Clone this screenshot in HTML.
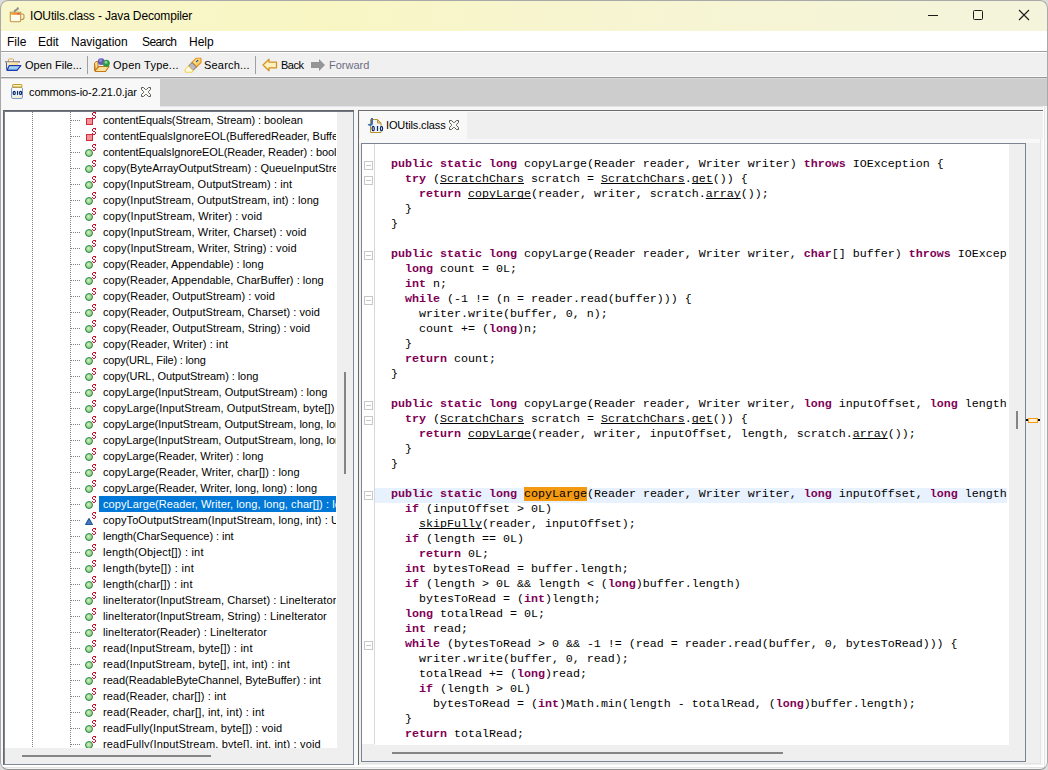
<!DOCTYPE html>
<html><head><meta charset="utf-8"><style>
html,body{margin:0;padding:0;width:1048px;height:770px;overflow:hidden;background:#dcdcdc}
div{position:absolute;box-sizing:content-box}
.t{font-family:"Liberation Sans",sans-serif;white-space:pre}
.c{position:absolute;left:16px;height:15px;font-family:"Liberation Mono",monospace;font-size:11.67px;line-height:13px;white-space:pre;color:#000}
.c b{color:#7f0055;font-weight:bold}
.c u{text-decoration:underline;text-underline-offset:1px;text-decoration-skip-ink:none}
.hl{background:#f39a12}
</style></head><body>
<div style="left:0;top:0;width:1048px;height:770px;border-radius:8px;overflow:hidden">
<div style="left:0px;top:0px;width:1048px;height:770px;background:#f7f7f7;"></div>
<div style="left:0;top:0;width:1048px;height:31px;background:linear-gradient(90deg,#f8f6cc 0%,#f9f6c4 30%,#f7f5d0 55%,#f4f4dc 100%)"></div>
<div style="left:0px;top:31px;width:1048px;height:20px;background:#ffffff;"></div>
<div style="left:0px;top:51px;width:1048px;height:1px;background:#a0a0a0;"></div>
<div style="left:0px;top:52px;width:1048px;height:1px;background:#ffffff;"></div>
<div style="left:0px;top:53px;width:1048px;height:23px;background:#f0f0f0;"></div>
<div style="left:0px;top:76px;width:1048px;height:1px;background:#fafafa;"></div>
<div style="left:0px;top:77px;width:1048px;height:1px;background:#989898;"></div>
<div style="left:0px;top:78px;width:1048px;height:1px;background:#d8d8d8;"></div>
<div style="left:160px;top:79px;width:888px;height:27px;background:#cdcdcd;"></div>
<div style="left:160px;top:106px;width:888px;height:1px;background:#e4e4e4;"></div>
<div style="left:2px;top:79px;width:158px;height:31px;background:#f8f8f8;"></div>
<div class="t" style="left:30px;top:9px;font-size:12px;line-height:14px;color:#000;letter-spacing:-0.15px">IOUtils.class - Java Decompiler</div>
<div class="t" style="left:7px;top:35px;font-size:12px;line-height:14px;color:#000;letter-spacing:0px">File</div>
<div class="t" style="left:38px;top:35px;font-size:12px;line-height:14px;color:#000;letter-spacing:0px">Edit</div>
<div class="t" style="left:71px;top:35px;font-size:12px;line-height:14px;color:#000;letter-spacing:0px">Navigation</div>
<div class="t" style="left:142px;top:35px;font-size:12px;line-height:14px;color:#000;letter-spacing:-0.6px">Search</div>
<div class="t" style="left:189px;top:35px;font-size:12px;line-height:14px;color:#000;letter-spacing:0px">Help</div>
<div class="t" style="left:25px;top:58px;font-size:11px;line-height:14px;color:#000;letter-spacing:0px">Open File...</div>
<div class="t" style="left:113px;top:58px;font-size:11px;line-height:14px;color:#000;letter-spacing:0.25px">Open Type...</div>
<div class="t" style="left:204px;top:58px;font-size:11px;line-height:14px;color:#000;letter-spacing:0.2px">Search...</div>
<div class="t" style="left:281px;top:58px;font-size:11px;line-height:14px;color:#000;letter-spacing:-0.5px">Back</div>
<div class="t" style="left:329px;top:58px;font-size:11px;line-height:14px;color:#6d6d80;letter-spacing:0px">Forward</div>
<div style="left:87px;top:56px;width:1px;height:18px;background:#a0a0a0;"></div>
<div style="left:255px;top:56px;width:1px;height:18px;background:#a0a0a0;"></div>
<div class="t" style="left:29px;top:85px;font-size:11px;line-height:14px;color:#000;letter-spacing:-0.08px">commons-io-2.21.0.jar</div>
<div style="left:3px;top:110px;width:351px;height:655px;background:#80889a;"></div>
<div style="left:3px;top:110px;width:351px;height:1px;background:#646464;"></div>
<div style="left:3px;top:111px;width:351px;height:1px;background:#707888;"></div>
<div style="left:3px;top:110px;width:1px;height:655px;background:#686868;"></div>
<div style="left:4px;top:111px;width:1px;height:653px;background:#7c8491;"></div>
<div style="left:5px;top:112px;width:348px;height:652px;background:#efefef;"></div>
<div style="left:5px;top:112px;width:332px;height:636px;background:#ffffff;"></div>
<div style="left:344px;top:372px;width:2px;height:102px;background:#858585;"></div>
<div style="left:22px;top:755px;width:189px;height:2px;background:#858585;"></div>
<div style="left:5px;top:112px;width:331px;height:636px;overflow:hidden;background:#fff">
<div style="left:27px;top:0;width:1px;height:636px;background:repeating-linear-gradient(180deg,#808080 0 1px,transparent 1px 2px)"></div>
<div style="left:65px;top:0;width:1px;height:636px;background:repeating-linear-gradient(180deg,#808080 0 1px,transparent 1px 2px)"></div>
<div style="left:66px;top:8px;width:9px;height:1px;background:repeating-linear-gradient(90deg,#808080 0 1px,transparent 1px 2px)"></div>
<div style="left:81px;top:6px;width:5px;height:5px;border:1px solid #d42a3a;background:#f49098"></div>
<svg style="position:absolute;left:87px;top:0px" width="5" height="7" shape-rendering="crispEdges"><path d="M1 0h3v1h-3zM0 1h1v2h-1zM3 1h1v1h-1zM1 3h2v1h-2zM3 4h1v2h-1zM0 5h1v1h-1zM1 6h2v1h-2z" fill="#d0102a"/><path d="M2 3h1v1h-1z M0 2.5h0" fill="#d0102a" opacity="0.5"/></svg>
<div class="t" style="left:98px;top:1px;font-size:11px;line-height:14px;color:#000;letter-spacing:-0.068px">contentEquals(Stream, Stream) : boolean</div>
<div style="left:66px;top:24px;width:9px;height:1px;background:repeating-linear-gradient(90deg,#808080 0 1px,transparent 1px 2px)"></div>
<div style="left:81px;top:22px;width:5px;height:5px;border:1px solid #d42a3a;background:#f49098"></div>
<svg style="position:absolute;left:87px;top:16px" width="5" height="7" shape-rendering="crispEdges"><path d="M1 0h3v1h-3zM0 1h1v2h-1zM3 1h1v1h-1zM1 3h2v1h-2zM3 4h1v2h-1zM0 5h1v1h-1zM1 6h2v1h-2z" fill="#d0102a"/><path d="M2 3h1v1h-1z M0 2.5h0" fill="#d0102a" opacity="0.5"/></svg>
<div class="t" style="left:98px;top:17px;font-size:11px;line-height:14px;color:#000;letter-spacing:0.000px">contentEqualsIgnoreEOL(BufferedReader, BufferedReader) : boolean</div>
<div style="left:66px;top:40px;width:9px;height:1px;background:repeating-linear-gradient(90deg,#808080 0 1px,transparent 1px 2px)"></div>
<div style="left:80px;top:37px;width:6px;height:6px;border-radius:50%;border:1px solid #1f8a3c;background:radial-gradient(circle at 45% 40%,#d4ecc8 0,#9ccf8c 60%,#5aaa60 100%)"></div>
<svg style="position:absolute;left:87px;top:32px" width="5" height="7" shape-rendering="crispEdges"><path d="M1 0h3v1h-3zM0 1h1v2h-1zM3 1h1v1h-1zM1 3h2v1h-2zM3 4h1v2h-1zM0 5h1v1h-1zM1 6h2v1h-2z" fill="#d0102a"/><path d="M2 3h1v1h-1z M0 2.5h0" fill="#d0102a" opacity="0.5"/></svg>
<div class="t" style="left:98px;top:33px;font-size:11px;line-height:14px;color:#000;letter-spacing:-0.100px">contentEqualsIgnoreEOL(Reader, Reader) : boolean</div>
<div style="left:66px;top:56px;width:9px;height:1px;background:repeating-linear-gradient(90deg,#808080 0 1px,transparent 1px 2px)"></div>
<div style="left:80px;top:53px;width:6px;height:6px;border-radius:50%;border:1px solid #1f8a3c;background:radial-gradient(circle at 45% 40%,#d4ecc8 0,#9ccf8c 60%,#5aaa60 100%)"></div>
<svg style="position:absolute;left:87px;top:48px" width="5" height="7" shape-rendering="crispEdges"><path d="M1 0h3v1h-3zM0 1h1v2h-1zM3 1h1v1h-1zM1 3h2v1h-2zM3 4h1v2h-1zM0 5h1v1h-1zM1 6h2v1h-2z" fill="#d0102a"/><path d="M2 3h1v1h-1z M0 2.5h0" fill="#d0102a" opacity="0.5"/></svg>
<div class="t" style="left:98px;top:49px;font-size:11px;line-height:14px;color:#000;letter-spacing:0.030px">copy(ByteArrayOutputStream) : QueueInputStream</div>
<div style="left:66px;top:72px;width:9px;height:1px;background:repeating-linear-gradient(90deg,#808080 0 1px,transparent 1px 2px)"></div>
<div style="left:80px;top:69px;width:6px;height:6px;border-radius:50%;border:1px solid #1f8a3c;background:radial-gradient(circle at 45% 40%,#d4ecc8 0,#9ccf8c 60%,#5aaa60 100%)"></div>
<svg style="position:absolute;left:87px;top:64px" width="5" height="7" shape-rendering="crispEdges"><path d="M1 0h3v1h-3zM0 1h1v2h-1zM3 1h1v1h-1zM1 3h2v1h-2zM3 4h1v2h-1zM0 5h1v1h-1zM1 6h2v1h-2z" fill="#d0102a"/><path d="M2 3h1v1h-1z M0 2.5h0" fill="#d0102a" opacity="0.5"/></svg>
<div class="t" style="left:98px;top:65px;font-size:11px;line-height:14px;color:#000;letter-spacing:0.089px">copy(InputStream, OutputStream) : int</div>
<div style="left:66px;top:88px;width:9px;height:1px;background:repeating-linear-gradient(90deg,#808080 0 1px,transparent 1px 2px)"></div>
<div style="left:80px;top:85px;width:6px;height:6px;border-radius:50%;border:1px solid #1f8a3c;background:radial-gradient(circle at 45% 40%,#d4ecc8 0,#9ccf8c 60%,#5aaa60 100%)"></div>
<svg style="position:absolute;left:87px;top:80px" width="5" height="7" shape-rendering="crispEdges"><path d="M1 0h3v1h-3zM0 1h1v2h-1zM3 1h1v1h-1zM1 3h2v1h-2zM3 4h1v2h-1zM0 5h1v1h-1zM1 6h2v1h-2z" fill="#d0102a"/><path d="M2 3h1v1h-1z M0 2.5h0" fill="#d0102a" opacity="0.5"/></svg>
<div class="t" style="left:98px;top:81px;font-size:11px;line-height:14px;color:#000;letter-spacing:0.076px">copy(InputStream, OutputStream, int) : long</div>
<div style="left:66px;top:104px;width:9px;height:1px;background:repeating-linear-gradient(90deg,#808080 0 1px,transparent 1px 2px)"></div>
<div style="left:80px;top:101px;width:6px;height:6px;border-radius:50%;border:1px solid #1f8a3c;background:radial-gradient(circle at 45% 40%,#d4ecc8 0,#9ccf8c 60%,#5aaa60 100%)"></div>
<svg style="position:absolute;left:87px;top:96px" width="5" height="7" shape-rendering="crispEdges"><path d="M1 0h3v1h-3zM0 1h1v2h-1zM3 1h1v1h-1zM1 3h2v1h-2zM3 4h1v2h-1zM0 5h1v1h-1zM1 6h2v1h-2z" fill="#d0102a"/><path d="M2 3h1v1h-1z M0 2.5h0" fill="#d0102a" opacity="0.5"/></svg>
<div class="t" style="left:98px;top:97px;font-size:11px;line-height:14px;color:#000;letter-spacing:0.132px">copy(InputStream, Writer) : void</div>
<div style="left:66px;top:120px;width:9px;height:1px;background:repeating-linear-gradient(90deg,#808080 0 1px,transparent 1px 2px)"></div>
<div style="left:80px;top:117px;width:6px;height:6px;border-radius:50%;border:1px solid #1f8a3c;background:radial-gradient(circle at 45% 40%,#d4ecc8 0,#9ccf8c 60%,#5aaa60 100%)"></div>
<svg style="position:absolute;left:87px;top:112px" width="5" height="7" shape-rendering="crispEdges"><path d="M1 0h3v1h-3zM0 1h1v2h-1zM3 1h1v1h-1zM1 3h2v1h-2zM3 4h1v2h-1zM0 5h1v1h-1zM1 6h2v1h-2z" fill="#d0102a"/><path d="M2 3h1v1h-1z M0 2.5h0" fill="#d0102a" opacity="0.5"/></svg>
<div class="t" style="left:98px;top:113px;font-size:11px;line-height:14px;color:#000;letter-spacing:0.108px">copy(InputStream, Writer, Charset) : void</div>
<div style="left:66px;top:136px;width:9px;height:1px;background:repeating-linear-gradient(90deg,#808080 0 1px,transparent 1px 2px)"></div>
<div style="left:80px;top:133px;width:6px;height:6px;border-radius:50%;border:1px solid #1f8a3c;background:radial-gradient(circle at 45% 40%,#d4ecc8 0,#9ccf8c 60%,#5aaa60 100%)"></div>
<svg style="position:absolute;left:87px;top:128px" width="5" height="7" shape-rendering="crispEdges"><path d="M1 0h3v1h-3zM0 1h1v2h-1zM3 1h1v1h-1zM1 3h2v1h-2zM3 4h1v2h-1zM0 5h1v1h-1zM1 6h2v1h-2z" fill="#d0102a"/><path d="M2 3h1v1h-1z M0 2.5h0" fill="#d0102a" opacity="0.5"/></svg>
<div class="t" style="left:98px;top:129px;font-size:11px;line-height:14px;color:#000;letter-spacing:0.108px">copy(InputStream, Writer, String) : void</div>
<div style="left:66px;top:152px;width:9px;height:1px;background:repeating-linear-gradient(90deg,#808080 0 1px,transparent 1px 2px)"></div>
<div style="left:80px;top:149px;width:6px;height:6px;border-radius:50%;border:1px solid #1f8a3c;background:radial-gradient(circle at 45% 40%,#d4ecc8 0,#9ccf8c 60%,#5aaa60 100%)"></div>
<svg style="position:absolute;left:87px;top:144px" width="5" height="7" shape-rendering="crispEdges"><path d="M1 0h3v1h-3zM0 1h1v2h-1zM3 1h1v1h-1zM1 3h2v1h-2zM3 4h1v2h-1zM0 5h1v1h-1zM1 6h2v1h-2z" fill="#d0102a"/><path d="M2 3h1v1h-1z M0 2.5h0" fill="#d0102a" opacity="0.5"/></svg>
<div class="t" style="left:98px;top:145px;font-size:11px;line-height:14px;color:#000;letter-spacing:0.010px">copy(Reader, Appendable) : long</div>
<div style="left:66px;top:168px;width:9px;height:1px;background:repeating-linear-gradient(90deg,#808080 0 1px,transparent 1px 2px)"></div>
<div style="left:80px;top:165px;width:6px;height:6px;border-radius:50%;border:1px solid #1f8a3c;background:radial-gradient(circle at 45% 40%,#d4ecc8 0,#9ccf8c 60%,#5aaa60 100%)"></div>
<svg style="position:absolute;left:87px;top:160px" width="5" height="7" shape-rendering="crispEdges"><path d="M1 0h3v1h-3zM0 1h1v2h-1zM3 1h1v1h-1zM1 3h2v1h-2zM3 4h1v2h-1zM0 5h1v1h-1zM1 6h2v1h-2z" fill="#d0102a"/><path d="M2 3h1v1h-1z M0 2.5h0" fill="#d0102a" opacity="0.5"/></svg>
<div class="t" style="left:98px;top:161px;font-size:11px;line-height:14px;color:#000;letter-spacing:0.033px">copy(Reader, Appendable, CharBuffer) : long</div>
<div style="left:66px;top:184px;width:9px;height:1px;background:repeating-linear-gradient(90deg,#808080 0 1px,transparent 1px 2px)"></div>
<div style="left:80px;top:181px;width:6px;height:6px;border-radius:50%;border:1px solid #1f8a3c;background:radial-gradient(circle at 45% 40%,#d4ecc8 0,#9ccf8c 60%,#5aaa60 100%)"></div>
<svg style="position:absolute;left:87px;top:176px" width="5" height="7" shape-rendering="crispEdges"><path d="M1 0h3v1h-3zM0 1h1v2h-1zM3 1h1v1h-1zM1 3h2v1h-2zM3 4h1v2h-1zM0 5h1v1h-1zM1 6h2v1h-2z" fill="#d0102a"/><path d="M2 3h1v1h-1z M0 2.5h0" fill="#d0102a" opacity="0.5"/></svg>
<div class="t" style="left:98px;top:177px;font-size:11px;line-height:14px;color:#000;letter-spacing:0.059px">copy(Reader, OutputStream) : void</div>
<div style="left:66px;top:200px;width:9px;height:1px;background:repeating-linear-gradient(90deg,#808080 0 1px,transparent 1px 2px)"></div>
<div style="left:80px;top:197px;width:6px;height:6px;border-radius:50%;border:1px solid #1f8a3c;background:radial-gradient(circle at 45% 40%,#d4ecc8 0,#9ccf8c 60%,#5aaa60 100%)"></div>
<svg style="position:absolute;left:87px;top:192px" width="5" height="7" shape-rendering="crispEdges"><path d="M1 0h3v1h-3zM0 1h1v2h-1zM3 1h1v1h-1zM1 3h2v1h-2zM3 4h1v2h-1zM0 5h1v1h-1zM1 6h2v1h-2z" fill="#d0102a"/><path d="M2 3h1v1h-1z M0 2.5h0" fill="#d0102a" opacity="0.5"/></svg>
<div class="t" style="left:98px;top:193px;font-size:11px;line-height:14px;color:#000;letter-spacing:0.056px">copy(Reader, OutputStream, Charset) : void</div>
<div style="left:66px;top:216px;width:9px;height:1px;background:repeating-linear-gradient(90deg,#808080 0 1px,transparent 1px 2px)"></div>
<div style="left:80px;top:213px;width:6px;height:6px;border-radius:50%;border:1px solid #1f8a3c;background:radial-gradient(circle at 45% 40%,#d4ecc8 0,#9ccf8c 60%,#5aaa60 100%)"></div>
<svg style="position:absolute;left:87px;top:208px" width="5" height="7" shape-rendering="crispEdges"><path d="M1 0h3v1h-3zM0 1h1v2h-1zM3 1h1v1h-1zM1 3h2v1h-2zM3 4h1v2h-1zM0 5h1v1h-1zM1 6h2v1h-2z" fill="#d0102a"/><path d="M2 3h1v1h-1z M0 2.5h0" fill="#d0102a" opacity="0.5"/></svg>
<div class="t" style="left:98px;top:209px;font-size:11px;line-height:14px;color:#000;letter-spacing:0.060px">copy(Reader, OutputStream, String) : void</div>
<div style="left:66px;top:232px;width:9px;height:1px;background:repeating-linear-gradient(90deg,#808080 0 1px,transparent 1px 2px)"></div>
<div style="left:80px;top:229px;width:6px;height:6px;border-radius:50%;border:1px solid #1f8a3c;background:radial-gradient(circle at 45% 40%,#d4ecc8 0,#9ccf8c 60%,#5aaa60 100%)"></div>
<svg style="position:absolute;left:87px;top:224px" width="5" height="7" shape-rendering="crispEdges"><path d="M1 0h3v1h-3zM0 1h1v2h-1zM3 1h1v1h-1zM1 3h2v1h-2zM3 4h1v2h-1zM0 5h1v1h-1zM1 6h2v1h-2z" fill="#d0102a"/><path d="M2 3h1v1h-1z M0 2.5h0" fill="#d0102a" opacity="0.5"/></svg>
<div class="t" style="left:98px;top:225px;font-size:11px;line-height:14px;color:#000;letter-spacing:0.116px">copy(Reader, Writer) : int</div>
<div style="left:66px;top:248px;width:9px;height:1px;background:repeating-linear-gradient(90deg,#808080 0 1px,transparent 1px 2px)"></div>
<div style="left:80px;top:245px;width:6px;height:6px;border-radius:50%;border:1px solid #1f8a3c;background:radial-gradient(circle at 45% 40%,#d4ecc8 0,#9ccf8c 60%,#5aaa60 100%)"></div>
<svg style="position:absolute;left:87px;top:240px" width="5" height="7" shape-rendering="crispEdges"><path d="M1 0h3v1h-3zM0 1h1v2h-1zM3 1h1v1h-1zM1 3h2v1h-2zM3 4h1v2h-1zM0 5h1v1h-1zM1 6h2v1h-2z" fill="#d0102a"/><path d="M2 3h1v1h-1z M0 2.5h0" fill="#d0102a" opacity="0.5"/></svg>
<div class="t" style="left:98px;top:241px;font-size:11px;line-height:14px;color:#000;letter-spacing:-0.167px">copy(URL, File) : long</div>
<div style="left:66px;top:264px;width:9px;height:1px;background:repeating-linear-gradient(90deg,#808080 0 1px,transparent 1px 2px)"></div>
<div style="left:80px;top:261px;width:6px;height:6px;border-radius:50%;border:1px solid #1f8a3c;background:radial-gradient(circle at 45% 40%,#d4ecc8 0,#9ccf8c 60%,#5aaa60 100%)"></div>
<svg style="position:absolute;left:87px;top:256px" width="5" height="7" shape-rendering="crispEdges"><path d="M1 0h3v1h-3zM0 1h1v2h-1zM3 1h1v1h-1zM1 3h2v1h-2zM3 4h1v2h-1zM0 5h1v1h-1zM1 6h2v1h-2z" fill="#d0102a"/><path d="M2 3h1v1h-1z M0 2.5h0" fill="#d0102a" opacity="0.5"/></svg>
<div class="t" style="left:98px;top:257px;font-size:11px;line-height:14px;color:#000;letter-spacing:-0.062px">copy(URL, OutputStream) : long</div>
<div style="left:66px;top:280px;width:9px;height:1px;background:repeating-linear-gradient(90deg,#808080 0 1px,transparent 1px 2px)"></div>
<div style="left:80px;top:277px;width:6px;height:6px;border-radius:50%;border:1px solid #1f8a3c;background:radial-gradient(circle at 45% 40%,#d4ecc8 0,#9ccf8c 60%,#5aaa60 100%)"></div>
<svg style="position:absolute;left:87px;top:272px" width="5" height="7" shape-rendering="crispEdges"><path d="M1 0h3v1h-3zM0 1h1v2h-1zM3 1h1v1h-1zM1 3h2v1h-2zM3 4h1v2h-1zM0 5h1v1h-1zM1 6h2v1h-2z" fill="#d0102a"/><path d="M2 3h1v1h-1z M0 2.5h0" fill="#d0102a" opacity="0.5"/></svg>
<div class="t" style="left:98px;top:273px;font-size:11px;line-height:14px;color:#000;letter-spacing:0.031px">copyLarge(InputStream, OutputStream) : long</div>
<div style="left:66px;top:296px;width:9px;height:1px;background:repeating-linear-gradient(90deg,#808080 0 1px,transparent 1px 2px)"></div>
<div style="left:80px;top:293px;width:6px;height:6px;border-radius:50%;border:1px solid #1f8a3c;background:radial-gradient(circle at 45% 40%,#d4ecc8 0,#9ccf8c 60%,#5aaa60 100%)"></div>
<svg style="position:absolute;left:87px;top:288px" width="5" height="7" shape-rendering="crispEdges"><path d="M1 0h3v1h-3zM0 1h1v2h-1zM3 1h1v1h-1zM1 3h2v1h-2zM3 4h1v2h-1zM0 5h1v1h-1zM1 6h2v1h-2z" fill="#d0102a"/><path d="M2 3h1v1h-1z M0 2.5h0" fill="#d0102a" opacity="0.5"/></svg>
<div class="t" style="left:98px;top:289px;font-size:11px;line-height:14px;color:#000;letter-spacing:0.120px">copyLarge(InputStream, OutputStream, byte[]) : long</div>
<div style="left:66px;top:312px;width:9px;height:1px;background:repeating-linear-gradient(90deg,#808080 0 1px,transparent 1px 2px)"></div>
<div style="left:80px;top:309px;width:6px;height:6px;border-radius:50%;border:1px solid #1f8a3c;background:radial-gradient(circle at 45% 40%,#d4ecc8 0,#9ccf8c 60%,#5aaa60 100%)"></div>
<svg style="position:absolute;left:87px;top:304px" width="5" height="7" shape-rendering="crispEdges"><path d="M1 0h3v1h-3zM0 1h1v2h-1zM3 1h1v1h-1zM1 3h2v1h-2zM3 4h1v2h-1zM0 5h1v1h-1zM1 6h2v1h-2z" fill="#d0102a"/><path d="M2 3h1v1h-1z M0 2.5h0" fill="#d0102a" opacity="0.5"/></svg>
<div class="t" style="left:98px;top:305px;font-size:11px;line-height:14px;color:#000;letter-spacing:0.020px">copyLarge(InputStream, OutputStream, long, long) : long</div>
<div style="left:66px;top:328px;width:9px;height:1px;background:repeating-linear-gradient(90deg,#808080 0 1px,transparent 1px 2px)"></div>
<div style="left:80px;top:325px;width:6px;height:6px;border-radius:50%;border:1px solid #1f8a3c;background:radial-gradient(circle at 45% 40%,#d4ecc8 0,#9ccf8c 60%,#5aaa60 100%)"></div>
<svg style="position:absolute;left:87px;top:320px" width="5" height="7" shape-rendering="crispEdges"><path d="M1 0h3v1h-3zM0 1h1v2h-1zM3 1h1v1h-1zM1 3h2v1h-2zM3 4h1v2h-1zM0 5h1v1h-1zM1 6h2v1h-2z" fill="#d0102a"/><path d="M2 3h1v1h-1z M0 2.5h0" fill="#d0102a" opacity="0.5"/></svg>
<div class="t" style="left:98px;top:321px;font-size:11px;line-height:14px;color:#000;letter-spacing:0.020px">copyLarge(InputStream, OutputStream, long, long, byte[]) : long</div>
<div style="left:66px;top:344px;width:9px;height:1px;background:repeating-linear-gradient(90deg,#808080 0 1px,transparent 1px 2px)"></div>
<div style="left:80px;top:341px;width:6px;height:6px;border-radius:50%;border:1px solid #1f8a3c;background:radial-gradient(circle at 45% 40%,#d4ecc8 0,#9ccf8c 60%,#5aaa60 100%)"></div>
<svg style="position:absolute;left:87px;top:336px" width="5" height="7" shape-rendering="crispEdges"><path d="M1 0h3v1h-3zM0 1h1v2h-1zM3 1h1v1h-1zM1 3h2v1h-2zM3 4h1v2h-1zM0 5h1v1h-1zM1 6h2v1h-2z" fill="#d0102a"/><path d="M2 3h1v1h-1z M0 2.5h0" fill="#d0102a" opacity="0.5"/></svg>
<div class="t" style="left:98px;top:337px;font-size:11px;line-height:14px;color:#000;letter-spacing:0.035px">copyLarge(Reader, Writer) : long</div>
<div style="left:66px;top:360px;width:9px;height:1px;background:repeating-linear-gradient(90deg,#808080 0 1px,transparent 1px 2px)"></div>
<div style="left:80px;top:357px;width:6px;height:6px;border-radius:50%;border:1px solid #1f8a3c;background:radial-gradient(circle at 45% 40%,#d4ecc8 0,#9ccf8c 60%,#5aaa60 100%)"></div>
<svg style="position:absolute;left:87px;top:352px" width="5" height="7" shape-rendering="crispEdges"><path d="M1 0h3v1h-3zM0 1h1v2h-1zM3 1h1v1h-1zM1 3h2v1h-2zM3 4h1v2h-1zM0 5h1v1h-1zM1 6h2v1h-2z" fill="#d0102a"/><path d="M2 3h1v1h-1z M0 2.5h0" fill="#d0102a" opacity="0.5"/></svg>
<div class="t" style="left:98px;top:353px;font-size:11px;line-height:14px;color:#000;letter-spacing:0.108px">copyLarge(Reader, Writer, char[]) : long</div>
<div style="left:66px;top:376px;width:9px;height:1px;background:repeating-linear-gradient(90deg,#808080 0 1px,transparent 1px 2px)"></div>
<div style="left:80px;top:373px;width:6px;height:6px;border-radius:50%;border:1px solid #1f8a3c;background:radial-gradient(circle at 45% 40%,#d4ecc8 0,#9ccf8c 60%,#5aaa60 100%)"></div>
<svg style="position:absolute;left:87px;top:368px" width="5" height="7" shape-rendering="crispEdges"><path d="M1 0h3v1h-3zM0 1h1v2h-1zM3 1h1v1h-1zM1 3h2v1h-2zM3 4h1v2h-1zM0 5h1v1h-1zM1 6h2v1h-2z" fill="#d0102a"/><path d="M2 3h1v1h-1z M0 2.5h0" fill="#d0102a" opacity="0.5"/></svg>
<div class="t" style="left:98px;top:369px;font-size:11px;line-height:14px;color:#000;letter-spacing:0.035px">copyLarge(Reader, Writer, long, long) : long</div>
<div style="left:66px;top:392px;width:9px;height:1px;background:repeating-linear-gradient(90deg,#808080 0 1px,transparent 1px 2px)"></div>
<div style="left:94px;top:384px;width:300px;height:16px;background:#0078d7;"></div>
<div style="left:80px;top:389px;width:6px;height:6px;border-radius:50%;border:1px solid #1f8a3c;background:radial-gradient(circle at 45% 40%,#d4ecc8 0,#9ccf8c 60%,#5aaa60 100%)"></div>
<svg style="position:absolute;left:87px;top:384px" width="5" height="7" shape-rendering="crispEdges"><path d="M1 0h3v1h-3zM0 1h1v2h-1zM3 1h1v1h-1zM1 3h2v1h-2zM3 4h1v2h-1zM0 5h1v1h-1zM1 6h2v1h-2z" fill="#d0102a"/><path d="M2 3h1v1h-1z M0 2.5h0" fill="#d0102a" opacity="0.5"/></svg>
<div class="t" style="left:98px;top:385px;font-size:11px;line-height:14px;color:#fff;letter-spacing:0.080px">copyLarge(Reader, Writer, long, long, char[]) : long</div>
<div style="left:66px;top:408px;width:9px;height:1px;background:repeating-linear-gradient(90deg,#808080 0 1px,transparent 1px 2px)"></div>
<svg style="position:absolute;left:80px;top:406px" width="8" height="7"><path d="M4 0.6 L7.4 6.5 L0.6 6.5 Z" fill="#4a78b8" stroke="#1c58a0" stroke-width="1.1" stroke-linejoin="round"/></svg>
<svg style="position:absolute;left:87px;top:400px" width="5" height="7" shape-rendering="crispEdges"><path d="M1 0h3v1h-3zM0 1h1v2h-1zM3 1h1v1h-1zM1 3h2v1h-2zM3 4h1v2h-1zM0 5h1v1h-1zM1 6h2v1h-2z" fill="#d0102a"/><path d="M2 3h1v1h-1z M0 2.5h0" fill="#d0102a" opacity="0.5"/></svg>
<div class="t" style="left:98px;top:401px;font-size:11px;line-height:14px;color:#000;letter-spacing:0.080px">copyToOutputStream(InputStream, long, int) : UnsynchronizedByteArrayInputStream</div>
<div style="left:66px;top:424px;width:9px;height:1px;background:repeating-linear-gradient(90deg,#808080 0 1px,transparent 1px 2px)"></div>
<div style="left:80px;top:421px;width:6px;height:6px;border-radius:50%;border:1px solid #1f8a3c;background:radial-gradient(circle at 45% 40%,#d4ecc8 0,#9ccf8c 60%,#5aaa60 100%)"></div>
<svg style="position:absolute;left:87px;top:416px" width="5" height="7" shape-rendering="crispEdges"><path d="M1 0h3v1h-3zM0 1h1v2h-1zM3 1h1v1h-1zM1 3h2v1h-2zM3 4h1v2h-1zM0 5h1v1h-1zM1 6h2v1h-2z" fill="#d0102a"/><path d="M2 3h1v1h-1z M0 2.5h0" fill="#d0102a" opacity="0.5"/></svg>
<div class="t" style="left:98px;top:417px;font-size:11px;line-height:14px;color:#000;letter-spacing:-0.032px">length(CharSequence) : int</div>
<div style="left:66px;top:440px;width:9px;height:1px;background:repeating-linear-gradient(90deg,#808080 0 1px,transparent 1px 2px)"></div>
<div style="left:80px;top:437px;width:6px;height:6px;border-radius:50%;border:1px solid #1f8a3c;background:radial-gradient(circle at 45% 40%,#d4ecc8 0,#9ccf8c 60%,#5aaa60 100%)"></div>
<svg style="position:absolute;left:87px;top:432px" width="5" height="7" shape-rendering="crispEdges"><path d="M1 0h3v1h-3zM0 1h1v2h-1zM3 1h1v1h-1zM1 3h2v1h-2zM3 4h1v2h-1zM0 5h1v1h-1zM1 6h2v1h-2z" fill="#d0102a"/><path d="M2 3h1v1h-1z M0 2.5h0" fill="#d0102a" opacity="0.5"/></svg>
<div class="t" style="left:98px;top:433px;font-size:11px;line-height:14px;color:#000;letter-spacing:0.214px">length(Object[]) : int</div>
<div style="left:66px;top:456px;width:9px;height:1px;background:repeating-linear-gradient(90deg,#808080 0 1px,transparent 1px 2px)"></div>
<div style="left:80px;top:453px;width:6px;height:6px;border-radius:50%;border:1px solid #1f8a3c;background:radial-gradient(circle at 45% 40%,#d4ecc8 0,#9ccf8c 60%,#5aaa60 100%)"></div>
<svg style="position:absolute;left:87px;top:448px" width="5" height="7" shape-rendering="crispEdges"><path d="M1 0h3v1h-3zM0 1h1v2h-1zM3 1h1v1h-1zM1 3h2v1h-2zM3 4h1v2h-1zM0 5h1v1h-1zM1 6h2v1h-2z" fill="#d0102a"/><path d="M2 3h1v1h-1z M0 2.5h0" fill="#d0102a" opacity="0.5"/></svg>
<div class="t" style="left:98px;top:449px;font-size:11px;line-height:14px;color:#000;letter-spacing:0.300px">length(byte[]) : int</div>
<div style="left:66px;top:472px;width:9px;height:1px;background:repeating-linear-gradient(90deg,#808080 0 1px,transparent 1px 2px)"></div>
<div style="left:80px;top:469px;width:6px;height:6px;border-radius:50%;border:1px solid #1f8a3c;background:radial-gradient(circle at 45% 40%,#d4ecc8 0,#9ccf8c 60%,#5aaa60 100%)"></div>
<svg style="position:absolute;left:87px;top:464px" width="5" height="7" shape-rendering="crispEdges"><path d="M1 0h3v1h-3zM0 1h1v2h-1zM3 1h1v1h-1zM1 3h2v1h-2zM3 4h1v2h-1zM0 5h1v1h-1zM1 6h2v1h-2z" fill="#d0102a"/><path d="M2 3h1v1h-1z M0 2.5h0" fill="#d0102a" opacity="0.5"/></svg>
<div class="t" style="left:98px;top:465px;font-size:11px;line-height:14px;color:#000;letter-spacing:0.205px">length(char[]) : int</div>
<div style="left:66px;top:488px;width:9px;height:1px;background:repeating-linear-gradient(90deg,#808080 0 1px,transparent 1px 2px)"></div>
<div style="left:80px;top:485px;width:6px;height:6px;border-radius:50%;border:1px solid #1f8a3c;background:radial-gradient(circle at 45% 40%,#d4ecc8 0,#9ccf8c 60%,#5aaa60 100%)"></div>
<svg style="position:absolute;left:87px;top:480px" width="5" height="7" shape-rendering="crispEdges"><path d="M1 0h3v1h-3zM0 1h1v2h-1zM3 1h1v1h-1zM1 3h2v1h-2zM3 4h1v2h-1zM0 5h1v1h-1zM1 6h2v1h-2z" fill="#d0102a"/><path d="M2 3h1v1h-1z M0 2.5h0" fill="#d0102a" opacity="0.5"/></svg>
<div class="t" style="left:98px;top:481px;font-size:11px;line-height:14px;color:#000;letter-spacing:0.098px">lineIterator(InputStream, Charset) : LineIterator</div>
<div style="left:66px;top:504px;width:9px;height:1px;background:repeating-linear-gradient(90deg,#808080 0 1px,transparent 1px 2px)"></div>
<div style="left:80px;top:501px;width:6px;height:6px;border-radius:50%;border:1px solid #1f8a3c;background:radial-gradient(circle at 45% 40%,#d4ecc8 0,#9ccf8c 60%,#5aaa60 100%)"></div>
<svg style="position:absolute;left:87px;top:496px" width="5" height="7" shape-rendering="crispEdges"><path d="M1 0h3v1h-3zM0 1h1v2h-1zM3 1h1v1h-1zM1 3h2v1h-2zM3 4h1v2h-1zM0 5h1v1h-1zM1 6h2v1h-2z" fill="#d0102a"/><path d="M2 3h1v1h-1z M0 2.5h0" fill="#d0102a" opacity="0.5"/></svg>
<div class="t" style="left:98px;top:497px;font-size:11px;line-height:14px;color:#000;letter-spacing:0.104px">lineIterator(InputStream, String) : LineIterator</div>
<div style="left:66px;top:520px;width:9px;height:1px;background:repeating-linear-gradient(90deg,#808080 0 1px,transparent 1px 2px)"></div>
<div style="left:80px;top:517px;width:6px;height:6px;border-radius:50%;border:1px solid #1f8a3c;background:radial-gradient(circle at 45% 40%,#d4ecc8 0,#9ccf8c 60%,#5aaa60 100%)"></div>
<svg style="position:absolute;left:87px;top:512px" width="5" height="7" shape-rendering="crispEdges"><path d="M1 0h3v1h-3zM0 1h1v2h-1zM3 1h1v1h-1zM1 3h2v1h-2zM3 4h1v2h-1zM0 5h1v1h-1zM1 6h2v1h-2z" fill="#d0102a"/><path d="M2 3h1v1h-1z M0 2.5h0" fill="#d0102a" opacity="0.5"/></svg>
<div class="t" style="left:98px;top:513px;font-size:11px;line-height:14px;color:#000;letter-spacing:0.106px">lineIterator(Reader) : LineIterator</div>
<div style="left:66px;top:536px;width:9px;height:1px;background:repeating-linear-gradient(90deg,#808080 0 1px,transparent 1px 2px)"></div>
<div style="left:80px;top:533px;width:6px;height:6px;border-radius:50%;border:1px solid #1f8a3c;background:radial-gradient(circle at 45% 40%,#d4ecc8 0,#9ccf8c 60%,#5aaa60 100%)"></div>
<svg style="position:absolute;left:87px;top:528px" width="5" height="7" shape-rendering="crispEdges"><path d="M1 0h3v1h-3zM0 1h1v2h-1zM3 1h1v1h-1zM1 3h2v1h-2zM3 4h1v2h-1zM0 5h1v1h-1zM1 6h2v1h-2z" fill="#d0102a"/><path d="M2 3h1v1h-1z M0 2.5h0" fill="#d0102a" opacity="0.5"/></svg>
<div class="t" style="left:98px;top:529px;font-size:11px;line-height:14px;color:#000;letter-spacing:0.213px">read(InputStream, byte[]) : int</div>
<div style="left:66px;top:552px;width:9px;height:1px;background:repeating-linear-gradient(90deg,#808080 0 1px,transparent 1px 2px)"></div>
<div style="left:80px;top:549px;width:6px;height:6px;border-radius:50%;border:1px solid #1f8a3c;background:radial-gradient(circle at 45% 40%,#d4ecc8 0,#9ccf8c 60%,#5aaa60 100%)"></div>
<svg style="position:absolute;left:87px;top:544px" width="5" height="7" shape-rendering="crispEdges"><path d="M1 0h3v1h-3zM0 1h1v2h-1zM3 1h1v1h-1zM1 3h2v1h-2zM3 4h1v2h-1zM0 5h1v1h-1zM1 6h2v1h-2z" fill="#d0102a"/><path d="M2 3h1v1h-1z M0 2.5h0" fill="#d0102a" opacity="0.5"/></svg>
<div class="t" style="left:98px;top:545px;font-size:11px;line-height:14px;color:#000;letter-spacing:0.205px">read(InputStream, byte[], int, int) : int</div>
<div style="left:66px;top:568px;width:9px;height:1px;background:repeating-linear-gradient(90deg,#808080 0 1px,transparent 1px 2px)"></div>
<div style="left:80px;top:565px;width:6px;height:6px;border-radius:50%;border:1px solid #1f8a3c;background:radial-gradient(circle at 45% 40%,#d4ecc8 0,#9ccf8c 60%,#5aaa60 100%)"></div>
<svg style="position:absolute;left:87px;top:560px" width="5" height="7" shape-rendering="crispEdges"><path d="M1 0h3v1h-3zM0 1h1v2h-1zM3 1h1v1h-1zM1 3h2v1h-2zM3 4h1v2h-1zM0 5h1v1h-1zM1 6h2v1h-2z" fill="#d0102a"/><path d="M2 3h1v1h-1z M0 2.5h0" fill="#d0102a" opacity="0.5"/></svg>
<div class="t" style="left:98px;top:561px;font-size:11px;line-height:14px;color:#000;letter-spacing:0.010px">read(ReadableByteChannel, ByteBuffer) : int</div>
<div style="left:66px;top:584px;width:9px;height:1px;background:repeating-linear-gradient(90deg,#808080 0 1px,transparent 1px 2px)"></div>
<div style="left:80px;top:581px;width:6px;height:6px;border-radius:50%;border:1px solid #1f8a3c;background:radial-gradient(circle at 45% 40%,#d4ecc8 0,#9ccf8c 60%,#5aaa60 100%)"></div>
<svg style="position:absolute;left:87px;top:576px" width="5" height="7" shape-rendering="crispEdges"><path d="M1 0h3v1h-3zM0 1h1v2h-1zM3 1h1v1h-1zM1 3h2v1h-2zM3 4h1v2h-1zM0 5h1v1h-1zM1 6h2v1h-2z" fill="#d0102a"/><path d="M2 3h1v1h-1z M0 2.5h0" fill="#d0102a" opacity="0.5"/></svg>
<div class="t" style="left:98px;top:577px;font-size:11px;line-height:14px;color:#000;letter-spacing:0.156px">read(Reader, char[]) : int</div>
<div style="left:66px;top:600px;width:9px;height:1px;background:repeating-linear-gradient(90deg,#808080 0 1px,transparent 1px 2px)"></div>
<div style="left:80px;top:597px;width:6px;height:6px;border-radius:50%;border:1px solid #1f8a3c;background:radial-gradient(circle at 45% 40%,#d4ecc8 0,#9ccf8c 60%,#5aaa60 100%)"></div>
<svg style="position:absolute;left:87px;top:592px" width="5" height="7" shape-rendering="crispEdges"><path d="M1 0h3v1h-3zM0 1h1v2h-1zM3 1h1v1h-1zM1 3h2v1h-2zM3 4h1v2h-1zM0 5h1v1h-1zM1 6h2v1h-2z" fill="#d0102a"/><path d="M2 3h1v1h-1z M0 2.5h0" fill="#d0102a" opacity="0.5"/></svg>
<div class="t" style="left:98px;top:593px;font-size:11px;line-height:14px;color:#000;letter-spacing:0.191px">read(Reader, char[], int, int) : int</div>
<div style="left:66px;top:616px;width:9px;height:1px;background:repeating-linear-gradient(90deg,#808080 0 1px,transparent 1px 2px)"></div>
<div style="left:80px;top:613px;width:6px;height:6px;border-radius:50%;border:1px solid #1f8a3c;background:radial-gradient(circle at 45% 40%,#d4ecc8 0,#9ccf8c 60%,#5aaa60 100%)"></div>
<svg style="position:absolute;left:87px;top:608px" width="5" height="7" shape-rendering="crispEdges"><path d="M1 0h3v1h-3zM0 1h1v2h-1zM3 1h1v1h-1zM1 3h2v1h-2zM3 4h1v2h-1zM0 5h1v1h-1zM1 6h2v1h-2z" fill="#d0102a"/><path d="M2 3h1v1h-1z M0 2.5h0" fill="#d0102a" opacity="0.5"/></svg>
<div class="t" style="left:98px;top:609px;font-size:11px;line-height:14px;color:#000;letter-spacing:0.122px">readFully(InputStream, byte[]) : void</div>
<div style="left:66px;top:632px;width:9px;height:1px;background:repeating-linear-gradient(90deg,#808080 0 1px,transparent 1px 2px)"></div>
<div style="left:80px;top:629px;width:6px;height:6px;border-radius:50%;border:1px solid #1f8a3c;background:radial-gradient(circle at 45% 40%,#d4ecc8 0,#9ccf8c 60%,#5aaa60 100%)"></div>
<svg style="position:absolute;left:87px;top:624px" width="5" height="7" shape-rendering="crispEdges"><path d="M1 0h3v1h-3zM0 1h1v2h-1zM3 1h1v1h-1zM1 3h2v1h-2zM3 4h1v2h-1zM0 5h1v1h-1zM1 6h2v1h-2z" fill="#d0102a"/><path d="M2 3h1v1h-1z M0 2.5h0" fill="#d0102a" opacity="0.5"/></svg>
<div class="t" style="left:98px;top:625px;font-size:11px;line-height:14px;color:#000;letter-spacing:0.161px">readFully(InputStream, byte[], int, int) : void</div>
</div>
<div style="left:358px;top:110px;width:685px;height:655px;background:#efefef;"></div>
<div style="left:358px;top:110px;width:685px;height:1px;background:#6a6a6a;"></div>
<div style="left:358px;top:110px;width:1px;height:655px;background:#6a6a6a;"></div>
<div style="left:1040px;top:139px;width:1px;height:625px;background:#e4e4e4;"></div>
<div style="left:1041px;top:139px;width:2px;height:625px;background:#f8f8f8;"></div>
<div style="left:359px;top:763px;width:681px;height:1px;background:#e4e4e4;"></div>
<div style="left:359px;top:111px;width:684px;height:1px;background:#f8f8f8;"></div>
<div style="left:360px;top:112px;width:107px;height:28px;background:#f8f8f8;"></div>
<div style="left:359px;top:139px;width:681px;height:4px;background:#f8f8f8;"></div>
<div style="left:1043px;top:106px;width:1px;height:662px;background:#ffffff;"></div>
<div style="left:1044px;top:106px;width:1px;height:662px;background:#e4e4e4;"></div>
<div style="left:1045px;top:106px;width:2px;height:662px;background:#f8f8f8;"></div>
<div style="left:1px;top:765px;width:1043px;height:2px;background:#ffffff;"></div>
<div style="left:1px;top:767px;width:1044px;height:1px;background:#e4e4e4;"></div>
<div style="left:1px;top:768px;width:1046px;height:1px;background:#f4f4f4;"></div>
<div class="t" style="left:386px;top:118px;font-size:11px;line-height:14px;color:#000;letter-spacing:-0.12px">IOUtils.class</div>
<div style="left:361px;top:143px;width:665px;height:619px;background:#7c8494;"></div>
<div style="left:362px;top:144px;width:663px;height:617px;background:#efefef;"></div>
<div style="left:362px;top:144px;width:647px;height:601px;background:#ffffff;"></div>
<div style="left:374px;top:144px;width:1px;height:600px;background:#d8d8d8;"></div>
<div style="left:362px;top:744px;width:13px;height:1px;background:#efefef;"></div>
<div style="left:1016px;top:411px;width:2px;height:18px;background:#858585;"></div>
<div style="left:392px;top:752px;width:391px;height:2px;background:#858585;"></div>
<div style="left:1026px;top:419px;width:2px;height:2px;background:#000;"></div>
<div style="left:1038px;top:419px;width:2px;height:2px;background:#000;"></div>
<div style="left:1028px;top:418px;width:8px;height:3px;border:1px solid #f39a12;background:#fdf0dc"></div>
<div style="left:375px;top:158px;width:632px;height:586px;overflow:hidden">
<div style="left:0px;top:330px;width:634px;height:15px;background:#e8f2fe;"></div>
<div class="c" style="top:0px"><b>public</b> <b>static</b> <b>long</b> copyLarge(Reader reader, Writer writer) <b>throws</b> IOException {</div>
<div class="c" style="top:15px">  <b>try</b> (<u>ScratchChars</u> scratch = <u>ScratchChars</u>.<u>get</u>()) {</div>
<div class="c" style="top:30px">    <b>return</b> <u>copyLarge</u>(reader, writer, scratch.<u>array</u>());</div>
<div class="c" style="top:45px">  }</div>
<div class="c" style="top:60px">}</div>
<div class="c" style="top:75px"></div>
<div class="c" style="top:90px"><b>public</b> <b>static</b> <b>long</b> copyLarge(Reader reader, Writer writer, <b>char</b>[] buffer) <b>throws</b> IOException {</div>
<div class="c" style="top:105px">  <b>long</b> count = 0L;</div>
<div class="c" style="top:120px">  <b>int</b> n;</div>
<div class="c" style="top:135px">  <b>while</b> (-1 != (n = reader.read(buffer))) {</div>
<div class="c" style="top:150px">    writer.write(buffer, 0, n);</div>
<div class="c" style="top:165px">    count += (<b>long</b>)n;</div>
<div class="c" style="top:180px">  }</div>
<div class="c" style="top:195px">  <b>return</b> count;</div>
<div class="c" style="top:210px">}</div>
<div class="c" style="top:225px"></div>
<div class="c" style="top:240px"><b>public</b> <b>static</b> <b>long</b> copyLarge(Reader reader, Writer writer, <b>long</b> inputOffset, <b>long</b> length, <b>char</b>[] buffer) <b>throws</b> IOException {</div>
<div class="c" style="top:255px">  <b>try</b> (<u>ScratchChars</u> scratch = <u>ScratchChars</u>.<u>get</u>()) {</div>
<div class="c" style="top:270px">    <b>return</b> <u>copyLarge</u>(reader, writer, inputOffset, length, scratch.<u>array</u>());</div>
<div class="c" style="top:285px">  }</div>
<div class="c" style="top:300px">}</div>
<div class="c" style="top:315px"></div>
<div class="c" style="top:330px"><b>public</b> <b>static</b> <b>long</b> <span class="hl">copyLarge</span>(Reader reader, Writer writer, <b>long</b> inputOffset, <b>long</b> length, <b>char</b>[] buffer) <b>throws</b> IOException {</div>
<div class="c" style="top:345px">  <b>if</b> (inputOffset &gt; 0L)</div>
<div class="c" style="top:360px">    <u>skipFully</u>(reader, inputOffset);</div>
<div class="c" style="top:375px">  <b>if</b> (length == 0L)</div>
<div class="c" style="top:390px">    <b>return</b> 0L;</div>
<div class="c" style="top:405px">  <b>int</b> bytesToRead = buffer.length;</div>
<div class="c" style="top:420px">  <b>if</b> (length &gt; 0L &amp;&amp; length &lt; (<b>long</b>)buffer.length)</div>
<div class="c" style="top:435px">    bytesToRead = (<b>int</b>)length;</div>
<div class="c" style="top:450px">  <b>long</b> totalRead = 0L;</div>
<div class="c" style="top:465px">  <b>int</b> read;</div>
<div class="c" style="top:480px">  <b>while</b> (bytesToRead &gt; 0 &amp;&amp; -1 != (read = reader.read(buffer, 0, bytesToRead))) {</div>
<div class="c" style="top:495px">    writer.write(buffer, 0, read);</div>
<div class="c" style="top:510px">    totalRead += (<b>long</b>)read;</div>
<div class="c" style="top:525px">    <b>if</b> (length &gt; 0L)</div>
<div class="c" style="top:540px">      bytesToRead = (<b>int</b>)Math.min(length - totalRead, (<b>long</b>)buffer.length);</div>
<div class="c" style="top:555px">  }</div>
<div class="c" style="top:570px">  <b>return</b> totalRead;</div>
<div class="c" style="top:585px">}</div>
</div>
<div style="left:364px;top:161px;width:7px;height:7px;border:1px solid #c8c8c8;background:#fff"></div>
<div style="left:366px;top:165px;width:5px;height:1px;background:#c8c8c8;"></div>
<div style="left:364px;top:176px;width:7px;height:7px;border:1px solid #c8c8c8;background:#fff"></div>
<div style="left:366px;top:180px;width:5px;height:1px;background:#c8c8c8;"></div>
<div style="left:364px;top:251px;width:7px;height:7px;border:1px solid #c8c8c8;background:#fff"></div>
<div style="left:366px;top:255px;width:5px;height:1px;background:#c8c8c8;"></div>
<div style="left:364px;top:296px;width:7px;height:7px;border:1px solid #c8c8c8;background:#fff"></div>
<div style="left:366px;top:300px;width:5px;height:1px;background:#c8c8c8;"></div>
<div style="left:364px;top:401px;width:7px;height:7px;border:1px solid #c8c8c8;background:#fff"></div>
<div style="left:366px;top:405px;width:5px;height:1px;background:#c8c8c8;"></div>
<div style="left:364px;top:416px;width:7px;height:7px;border:1px solid #c8c8c8;background:#fff"></div>
<div style="left:366px;top:420px;width:5px;height:1px;background:#c8c8c8;"></div>
<div style="left:364px;top:491px;width:7px;height:7px;border:1px solid #c8c8c8;background:#fff"></div>
<div style="left:366px;top:495px;width:5px;height:1px;background:#c8c8c8;"></div>
<div style="left:364px;top:641px;width:7px;height:7px;border:1px solid #c8c8c8;background:#fff"></div>
<div style="left:366px;top:645px;width:5px;height:1px;background:#c8c8c8;"></div>
<svg style="position:absolute;left:6px;top:4px" width="24" height="22" viewBox="0 0 24 22">
<defs><linearGradient id="cf" x1="0" y1="0" x2="1" y2="0"><stop offset="0" stop-color="#f8a030"/><stop offset="0.6" stop-color="#f09030"/><stop offset="1" stop-color="#e04030"/></linearGradient></defs>
<path d="M8.8 8.4 Q8 6.8 10.2 5.9 Q12.2 5 11.8 4.2" fill="none" stroke="#8c8c8c" stroke-width="2" stroke-linecap="round"/>
<path d="M14.5 10 H16.5 Q18 10 18 11.5 V13.5 Q18 15.5 15.5 15.5 H14.5" fill="#fff4dc" stroke="#c09440" stroke-width="1.1"/>
<path d="M4.3 8.3 H14.7 V16.5 Q14.7 17.7 13.5 17.7 H5.5 Q4.3 17.7 4.3 16.5 Z" fill="#fffcec" stroke="#c09440" stroke-width="1.1"/>
<rect x="5.2" y="9" width="8.6" height="1.8" fill="url(#cf)"/>
</svg>
<div style="left:928px;top:15px;width:10px;height:1px;background:#1a1a1a;"></div>
<div style="left:973px;top:10px;width:8px;height:8px;border:1px solid #1a1a1a;border-radius:1.5px"></div>
<svg style="position:absolute;left:1018px;top:9px" width="12" height="12" viewBox="0 0 12 12"><path d="M1 1 L11 11 M11 1 L1 11" stroke="#1a1a1a" stroke-width="1.1"/></svg>
<svg style="position:absolute;left:2px;top:54px" width="24" height="22" viewBox="0 0 24 22">
<defs><linearGradient id="fy" x1="0" y1="0" x2="1" y2="1"><stop offset="0" stop-color="#fff6c8"/><stop offset="1" stop-color="#f8c858"/></linearGradient>
<linearGradient id="fb" x1="0" y1="0" x2="0" y2="1"><stop offset="0" stop-color="#c4ecff"/><stop offset="1" stop-color="#78b0ec"/></linearGradient></defs>
<path d="M6.5 7.5 V5.8 Q6.5 5 7.3 5 H10.7 Q11.5 5 11.5 5.8 V7.5" fill="#fff" stroke="#d4a050" stroke-width="1"/>
<rect x="3" y="7.2" width="15" height="1.3" fill="#8c7c7c"/>
<rect x="4" y="8.5" width="12" height="8" fill="url(#fy)"/>
<path d="M4.5 8.5 V15.5" stroke="#3c5cc0" stroke-width="1"/>
<path d="M7.2 11.7 H18.8 L15 16.3 H5 Z" fill="url(#fb)" stroke="#1a3ab0" stroke-width="1.2" stroke-linejoin="round"/>
</svg>
<svg style="position:absolute;left:93px;top:57px" width="18" height="16" viewBox="0 0 18 16">
<path d="M1.5 6.5 L3 4.5 H5 V13.5 L2.5 14.5 Z" fill="#f8dc90" stroke="#c47818" stroke-width="1"/>
<path d="M1.5 6.5 V13.5 L3 14.5 H12.5 L16 9.5 H6 L2 13.5" fill="#fbe29a" stroke="#c47818" stroke-width="1.1" stroke-linejoin="round"/>
<circle cx="8.2" cy="4.6" r="3.4" fill="#6a5ab8"/>
<circle cx="7.6" cy="3.6" r="1.4" fill="#9c8ee0"/>
<circle cx="13.3" cy="6.2" r="3.5" fill="#2e9a48"/>
<circle cx="13" cy="5.3" r="1.5" fill="#8ed090"/>
</svg>
<svg style="position:absolute;left:182px;top:54px" width="24" height="22" viewBox="0 0 24 22">
<defs><linearGradient id="tg" x1="0" y1="0" x2="1" y2="1"><stop offset="0" stop-color="#fff4b0"/><stop offset="1" stop-color="#f0b840"/></linearGradient></defs>
<path d="M14.3 4.2 L19 4.2 L19 8.5 L14.5 13 L10 8.5 Z" fill="url(#tg)" stroke="#e8941c" stroke-width="1.1" stroke-linejoin="round"/>
<path d="M10 8.5 L14.5 13 L11 16.5 L6.5 12 Z" fill="#bcb8c4" stroke="#8a7050" stroke-width="1"/>
<path d="M6.5 12 L11 16.5 L10.2 18.2 H3.2 V15.3 Z" fill="#fffce4" stroke="#f0c838" stroke-width="0.9"/>
<circle cx="14.6" cy="7.6" r="0.75" fill="#2050a0"/><circle cx="15.6" cy="6.6" r="0.75" fill="#2050a0"/>
</svg>
<svg style="position:absolute;left:262px;top:58px" width="16" height="14" viewBox="0 0 16 14">
<path d="M1 7 L7 1.2 V4.2 H14.5 V9.8 H7 V12.8 Z" fill="#fff0c0" stroke="#d4901c" stroke-width="1.2" stroke-linejoin="round"/>
</svg>
<svg style="position:absolute;left:310px;top:58px" width="16" height="14" viewBox="0 0 16 14"><path d="M15 7 L9 1 V4 H1 V10 H9 V13 Z" fill="#959595"/></svg>
<svg style="position:absolute;left:10px;top:83px" width="14" height="17" viewBox="0 0 14 17">
<defs><linearGradient id="jb" x1="0" y1="0" x2="0" y2="1"><stop offset="0" stop-color="#ffffff"/><stop offset="1" stop-color="#dce8f8"/></linearGradient></defs>
<path d="M2.8 4.5 H11.2 Q12.5 4.5 12.5 5.8 V14 Q12.5 15.5 11 15.5 H3 Q1.5 15.5 1.5 14 V5.8 Q1.5 4.5 2.8 4.5 Z" fill="url(#jb)" stroke="#7c98cc" stroke-width="1"/>
<rect x="2.5" y="13.3" width="9" height="1.4" fill="#fbf0c0"/>
<rect x="2.5" y="1.5" width="9.5" height="2.6" rx="1.3" fill="#fff4c8" stroke="#c8a028" stroke-width="1.1"/>
<ellipse cx="4.2" cy="9.9" rx="1.05" ry="1.6" fill="none" stroke="#0c2a66" stroke-width="1.2"/>
<rect x="6.95" y="7.9" width="1.2" height="4" fill="#0c2a66"/>
<ellipse cx="10.6" cy="9.9" rx="1.05" ry="1.6" fill="none" stroke="#0c2a66" stroke-width="1.2"/>
</svg>
<svg style="position:absolute;left:366px;top:115px" width="19" height="20" viewBox="0 0 19 20">
<path d="M4.5 4.5 H11.5 L15 8 V17.5 H4.5 Z" fill="#f2f4fa" stroke="#b8902c" stroke-width="1"/>
<path d="M11.5 4.5 V8 H15 Z" fill="#f0d890" stroke="#b8902c" stroke-width="1"/>
<path d="M6 3 V8.2 Q6 10 4.2 10 Q2.8 10 2.6 9" fill="none" stroke="#3a74b4" stroke-width="2"/>
<rect x="5" y="10.5" width="13" height="6" fill="#f2f4fa" opacity="0.8"/>
<ellipse cx="7.2" cy="13.5" rx="1.1" ry="2.1" fill="none" stroke="#0c2a66" stroke-width="1.2"/>
<rect x="10.9" y="11" width="1.2" height="5" fill="#0c2a66"/>
<ellipse cx="15.5" cy="13.5" rx="1.1" ry="2.1" fill="none" stroke="#0c2a66" stroke-width="1.2"/>
</svg>
<svg style="position:absolute;left:141px;top:87px" width="10" height="10" viewBox="0 0 10 10"><path d="M0.5 0.5 H2.5 L4.5 2.5 H5.5 L7.5 0.5 H9.5 V2.5 L7.5 4.5 V5.5 L9.5 7.5 V9.5 H7.5 L5.5 7.5 H4.5 L2.5 9.5 H0.5 V7.5 L2.5 5.5 V4.5 L0.5 2.5 Z" fill="none" stroke="#5a5a4c" stroke-width="1"/></svg>
<svg style="position:absolute;left:449px;top:120px" width="10" height="10" viewBox="0 0 10 10"><path d="M0.5 0.5 H2.5 L4.5 2.5 H5.5 L7.5 0.5 H9.5 V2.5 L7.5 4.5 V5.5 L9.5 7.5 V9.5 H7.5 L5.5 7.5 H4.5 L2.5 9.5 H0.5 V7.5 L2.5 5.5 V4.5 L0.5 2.5 Z" fill="none" stroke="#5a5a4c" stroke-width="1"/></svg>
</div>
<div style="left:0;top:0;width:1046px;height:768px;border:1px solid #a8a8a8;border-bottom-color:#909090;border-radius:8px"></div>

</body></html>
